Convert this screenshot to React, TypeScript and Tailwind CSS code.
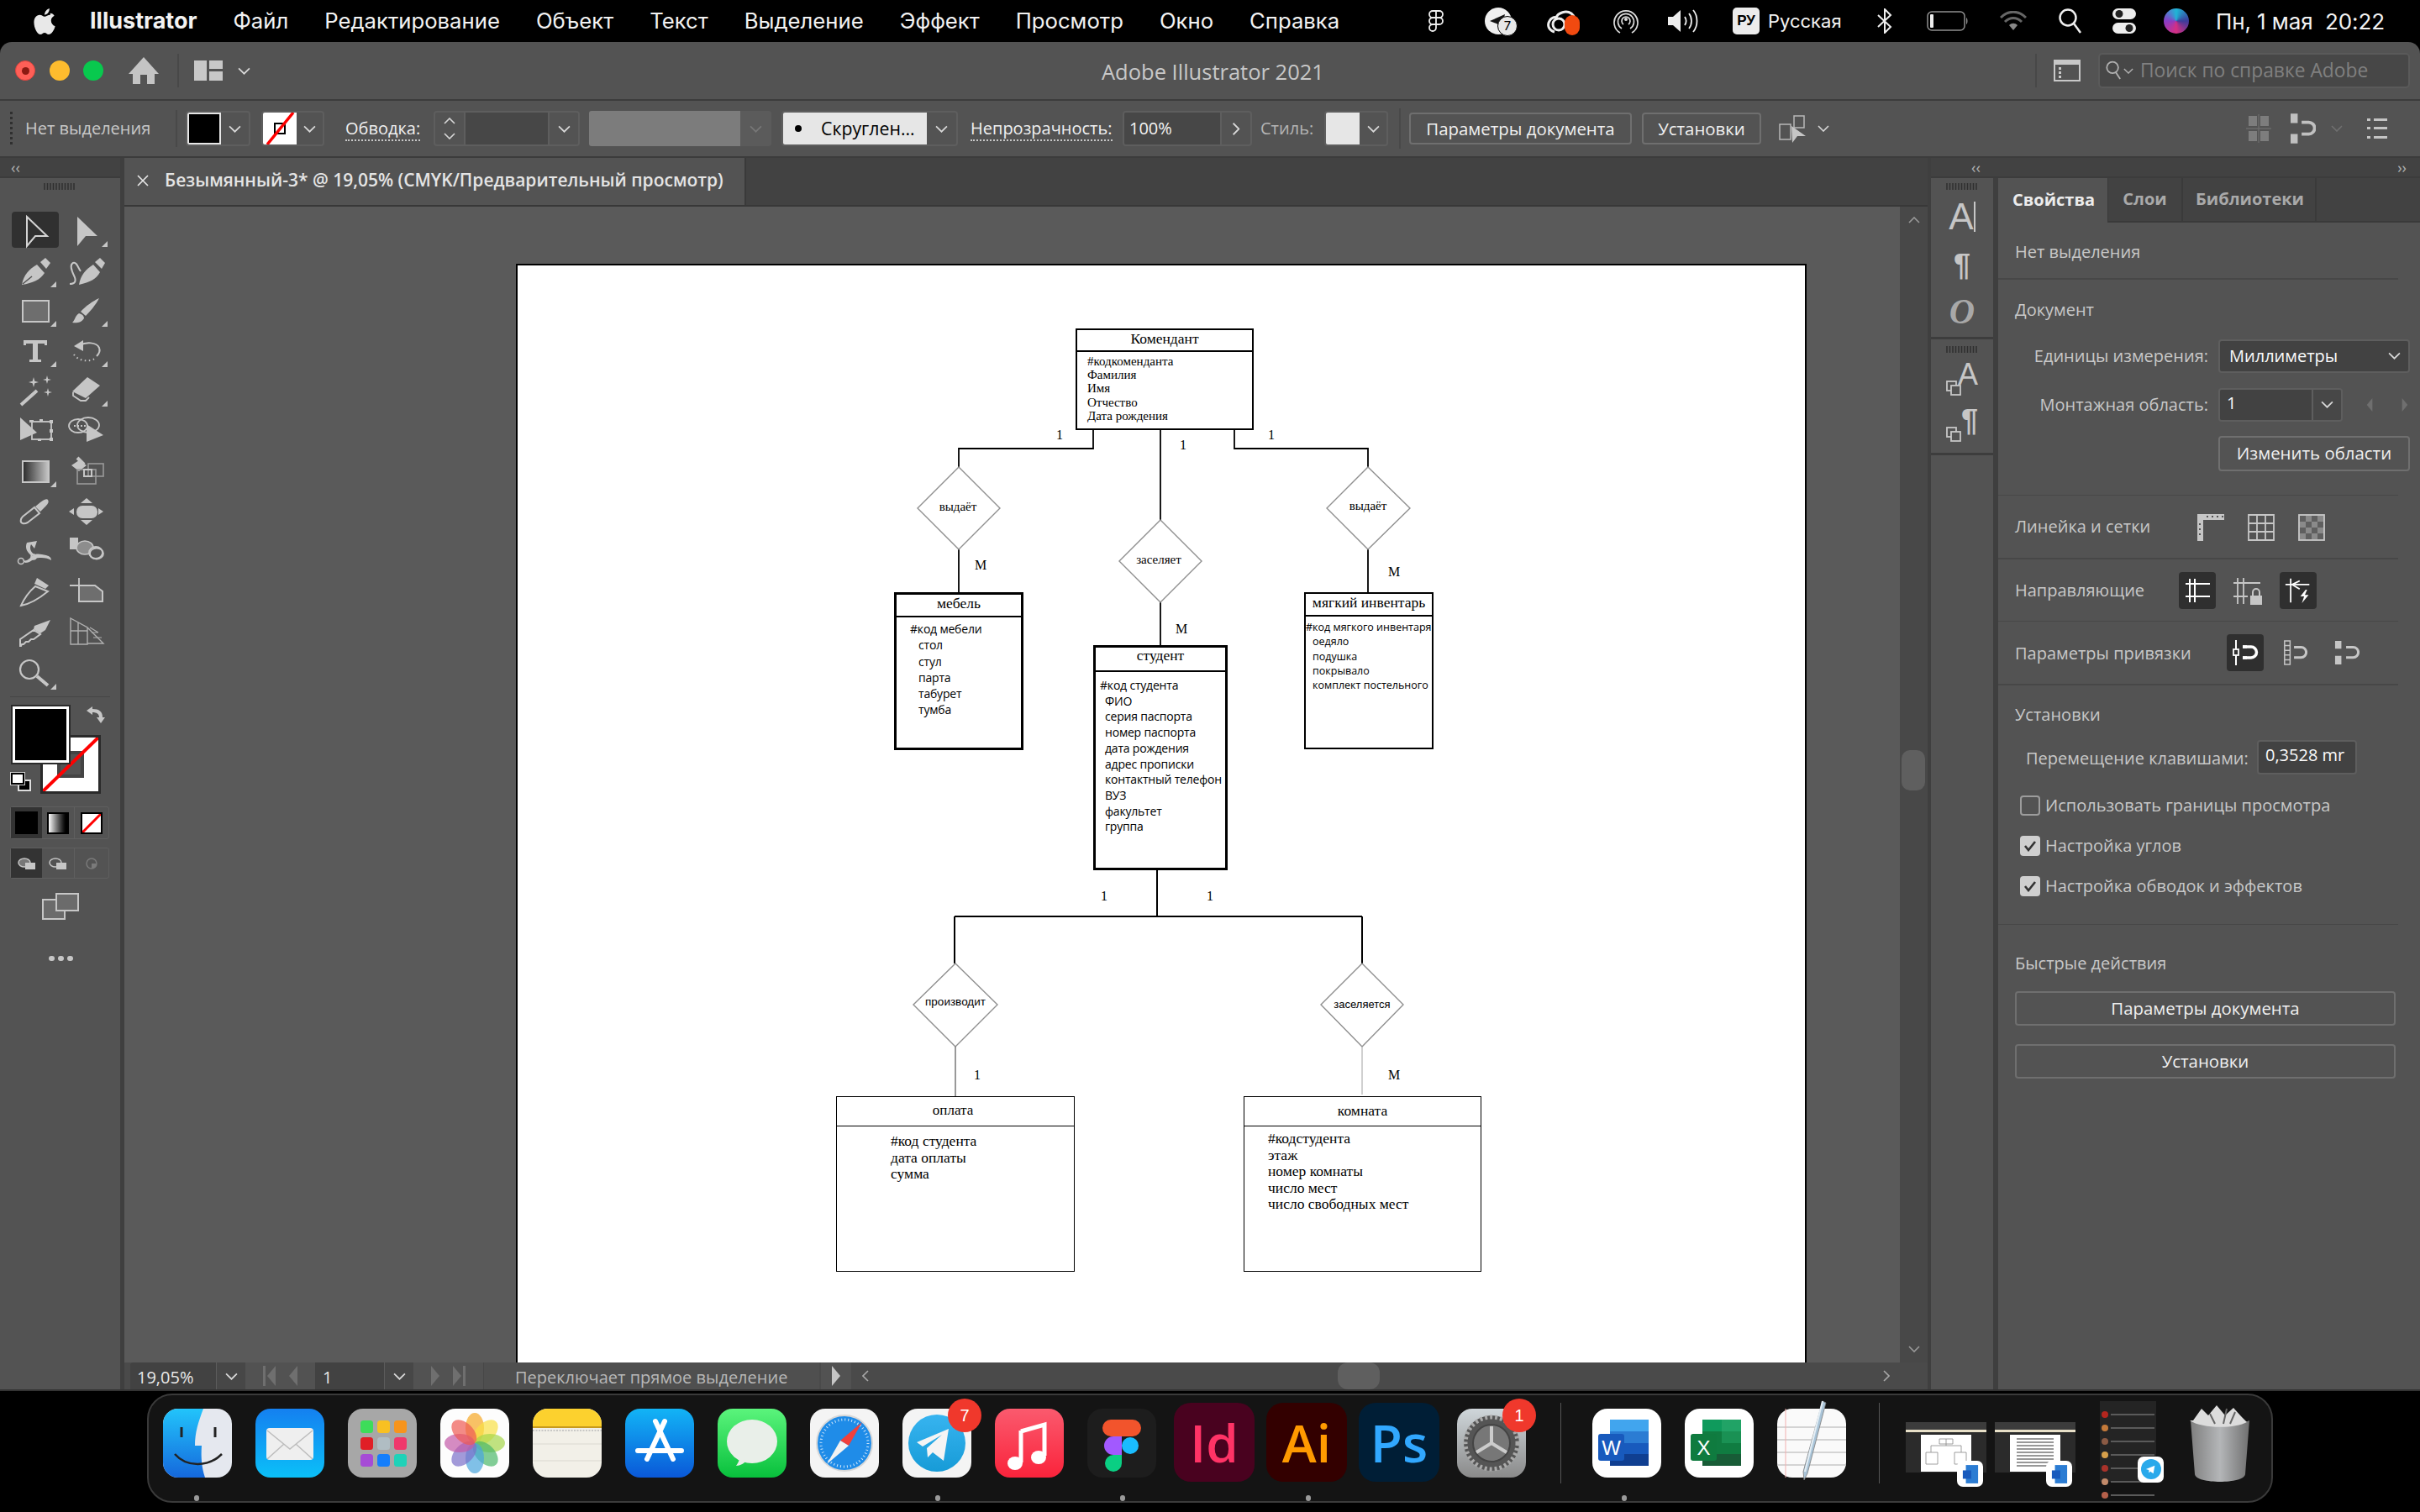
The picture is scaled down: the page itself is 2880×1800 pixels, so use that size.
import React from "react";

const C = "#c6c6c6";

function Chev({ className = "w-[15px] h-[9px]", color = "#d8d8d8" }: { className?: string; color?: string }) {
  return (
    <svg viewBox="0 0 14 8" className={className}>
      <path d="M1 1l6 6 6-6" fill="none" stroke={color} strokeWidth="1.6" />
    </svg>
  );
}

function Grip({ className = "" }: { className?: string }) {
  return (
    <svg viewBox="0 0 38 8" className={`w-[38px] h-[8px] ${className}`}>
      <path d="M1 0v8M4.500 0v8M8 0v8M11.500 0v8M15 0v8M18.500 0v8M22 0v8M25.500 0v8M29 0v8M32.500 0v8M36 0v8" stroke="#2f2f2f" strokeWidth="1.500" />
    </svg>
  );
}

function Corner() {
  return <polygon points="55,34 55,41 48,41" fill={C} />;
}

function star(x: number, y: number, r: number) {
  const k = r * 0.22;
  return `M${x} ${y - r}L${x + k} ${y - k}L${x + r} ${y}L${x + k} ${y + k}L${x} ${y + r}L${x - k} ${y + k}L${x - r} ${y}L${x - k} ${y - k}Z`;
}

const toolIcons: React.ReactNode[] = [
  <polygon key="a" points="20,5 44,28 30,28 20,40" fill="none" stroke="#d4d4d4" strokeWidth="2" />,
  <g key="b"><polygon points="19,5 43,28 29,28 19,40" fill={C} /><Corner /></g>,
  <g key="c"><path d="M14 38c2-12 9-19 18-24l9 10c-5 8-14 12-27 14z" fill={C} /><path d="M36 11l6-5 6 6-5 7z" fill={C} /><path d="M15 37l11-9" stroke="#535353" strokeWidth="1.500" /><Corner /></g>,
  <g key="d"><path d="M10 37c7 0 8-4 5-10s-5-13-1-15 6 6 9 10" fill="none" stroke={C} strokeWidth="2" /><path d="M21 38c2-12 8-18 17-24l8 9c-4 8-12 12-25 15z" fill={C} /><path d="M40 11l6-5 6 6-4 7z" fill={C} /></g>,
  <g key="e"><rect x="15" y="10" width="31" height="25" fill="#6e6e6e" stroke={C} strokeWidth="2" /><Corner /></g>,
  <g key="f"><path d="M45 7C38 10 28 17 23 23c2 2 4 3 6 5C34 23 41 15 45 7z" fill={C} /><path d="M21 25c4 1 6 3 6 6-3 5-9 6-14 5 3-2 3-8 8-11z" fill={C} /><Corner /></g>,
  <g key="g"><path d="M16 9h28v6h-3v-2H33v19h4v3H23v-3h4V13H19v2h-3z" fill={C} /><Corner /></g>,
  <g key="h"><path d="M22 15c7-4 20-4 23 3 2 5-1 8-3 10" fill="none" stroke={C} strokeWidth="2" /><polygon points="15,16 26,9 26,22" fill={C} /><path d="M15 26c5 8 18 9 25 5" fill="none" stroke={C} strokeWidth="2" strokeDasharray="1.500 3.500" /><Corner /></g>,
  <g key="i"><path d="M13 39L32 22" stroke={C} strokeWidth="4" /><path d={star(28, 12, 6)} fill={C} /><path d={star(44, 9, 5)} fill={C} /><path d={star(45, 24, 5)} fill={C} /></g>,
  <g key="j"><path d="M13 23L31 6 46 16 29 31z" fill={C} /><path d="M14 24v4l9 6h6l4-4" fill="none" stroke={C} strokeWidth="1.800" /><Corner /></g>,
  <g key="k"><polygon points="12,6 32,24 12,33" fill={C} /><rect x="26" y="11" width="23" height="21" fill="none" stroke={C} strokeWidth="1.800" /><path d="M23 9h5v3h-5zM35 8h4v3h-4zM47 9h4v4h-4zM47 20h4v4h-4zM47 30h4v4h-4zM33 31h4v3h-4z" fill={C} /></g>,
  <g key="l"><ellipse cx="20" cy="16" rx="11" ry="8" fill="none" stroke={C} strokeWidth="1.800" /><ellipse cx="32" cy="15" rx="13" ry="9" fill="none" stroke={C} strokeWidth="1.800" /><path d="M15 16h14" stroke={C} strokeWidth="2" strokeDasharray="2 2" /><polygon points="30,14 50,27 30,35" fill={C} /></g>,
  <g key="m"><defs><linearGradient id="gr" x1="0" x2="1" y1="0" y2="0"><stop offset="0" stopColor="#2a2a2a" /><stop offset="1" stopColor="#c8c8c8" /></linearGradient></defs><rect x="15" y="10" width="31" height="25" fill="url(#gr)" stroke={C} strokeWidth="2" /><Corner /></g>,
  <g key="n"><path d="M12 15l9-6 9 6-9 7z" fill={C} /><path d="M19 6l8 8" stroke={C} strokeWidth="4" /><rect x="32" y="13" width="18" height="15" fill="none" stroke="#9a9a9a" strokeWidth="1.600" /><rect x="19" y="20" width="22" height="17" fill="none" stroke="#9a9a9a" strokeWidth="1.600" /><rect x="27" y="20" width="9" height="8" fill="none" stroke={C} strokeWidth="2" /></g>,
  <g key="o"><path d="M15 37c-4-1-2-6 0-8l14-11 6 7-14 11c-2 1-4 2-6 1z" fill="none" stroke={C} strokeWidth="2" /><path d="M30 17l6-5c4-3 8-5 9-3 2 3-1 6-4 9l-5 5z" fill={C} /></g>,
  <g key="p"><rect x="18" y="16" width="25" height="15" rx="7" fill={C} /><polygon points="30,7 37,13 23,13" fill={C} /><polygon points="30,39 37,33 23,33" fill={C} /><polygon points="9,23 15,19 15,27" fill={C} /><polygon points="50,23 44,19 44,27" fill={C} /></g>,
  <g key="q"><path d="M14 32c5 4 9-1 12-4 6-4 10-2 17-1 3 1 6 2 6 6-3-2-7-3-12-3-9-1-12 6-19 6z" fill={C} /><path d="M20 12c-3 7 1 12 6 16l3-2c-5-3-6-8-4-12l4 5 3-9-12 2z" fill={C} /><circle cx="13" cy="34" r="3.500" fill="none" stroke={C} strokeWidth="1.500" /><circle cx="28" cy="29" r="3" fill="none" stroke={C} strokeWidth="1.500" /></g>,
  <g key="r"><rect x="10" y="6" width="10" height="14" fill={C} /><ellipse cx="28" cy="18" rx="10" ry="8" fill="#8d8d8d" stroke={C} strokeWidth="1.600" /><ellipse cx="41" cy="24" rx="8" ry="7" fill="#535353" stroke={C} strokeWidth="1.800" /><ellipse cx="42" cy="25" rx="8" ry="6.500" fill="none" stroke={C} strokeWidth="1.800" /></g>,
  <g key="s"><path d="M13 40c4-9 10-17 17-23l15 6C34 32 24 38 13 40z" fill="none" stroke={C} strokeWidth="2" /><path d="M32 7l14 9-4 4-13-6z" fill={C} /></g>,
  <g key="t"><path d="M10 16h13M21 7v9" stroke={C} strokeWidth="1.800" /><path d="M21 16h19l9 7v12H21z" fill="#6e6e6e" stroke={C} strokeWidth="2" /></g>,
  <g key="u"><path d="M12 40v-8l16-11 8 5-8 6h-3l-3 3h-3l-3 3h-2l-1 2z" fill="none" stroke={C} strokeWidth="2" /><path d="M29 16l19-7-6 12-6 4-8-5z" fill={C} /></g>,
  <g key="v"><path d="M11 7l20 11v20H11zM11 22h20M20 12v26M31 18l19 19H31" fill="none" stroke="#b0b0b0" strokeWidth="1.400" /><path d="M34 18l10 6M36 24h8M38 30h10" stroke="#b0b0b0" strokeWidth="1.200" /></g>,
  <g key="w" transform="translate(0 3)"><circle cx="23" cy="17" r="11" fill="none" stroke={C} strokeWidth="2.200" /><path d="M32 25l13 11" stroke={C} strokeWidth="4" /><Corner /></g>,
];

function ToolCell({ i }: { i: number }) {
  return (
    <div className="relative w-[61px] h-[47.6px] flex items-center justify-center">
      {i === 0 && <div className="absolute left-[2.500px] top-0 w-[56px] h-[43px] rounded-[4px] bg-[#303030]" />}
      <svg viewBox="0 0 60 46" className="relative w-[60px] h-[46px] overflow-visible">{toolIcons[i]}</svg>
    </div>
  );
}

function LeftPanel() {
  return (
    <div className="w-[143px] shrink-0 flex flex-col bg-[#535353]">
      <div className="h-[22px] bg-[#424242] flex items-center pl-[13px] text-[#b0b0b0] text-[18px] leading-none">‹‹</div>
      <div className="h-[2px] bg-[#3c3c3c]" />
      <div className="pl-[52px] pt-[6px] h-[40px]"><Grip /></div>
      <div className="grid grid-cols-[61px_61px] pl-[11.500px] mt-[0.200px]">
        {toolIcons.map((_, i) => <ToolCell key={i} i={i} />)}
      </div>
      <div className="mx-[12px] h-[1px] bg-[#454545] mt-[6px]" />
      <div className="relative h-[120px] ml-[13px] mt-[9px]">
        <div className="absolute left-[35px] top-[36px] w-[72px] h-[70px] bg-[#2a2a2a] p-[3px]">
          <div className="relative w-full h-full bg-white flex items-center justify-center overflow-hidden">
            <div className="w-[32px] h-[32px] border-[4px] border-[#444] bg-[#535353]" />
            <svg viewBox="0 0 66 64" preserveAspectRatio="none" className="absolute inset-0 w-full h-full"><path d="M0 64L66 0" stroke="#ff0000" strokeWidth="4" /></svg>
          </div>
        </div>
        <div className="absolute left-0 top-0 w-[71px] h-[71px] bg-[#2a2a2a] p-[2px]">
          <div className="w-full h-full border-[3px] border-white bg-black" />
        </div>
        <svg viewBox="0 0 24 22" className="absolute left-[89px] top-[1px] w-[24px] h-[22px]">
          <path d="M1 6l7-5v3c8 0 12 3 12 10h3l-5 7-5-7h3c0-4-3-6-8-6v3z" fill={C} />
        </svg>
        <div className="absolute left-0 top-[81px] w-[24px] h-[25px]">
          <div className="absolute left-[8px] top-[8px] w-[16px] h-[14px] bg-black border-[2px] border-[#ddd]" />
          <div className="absolute left-0 top-0 w-[16px] h-[14px] bg-white border-[2px] border-black outline outline-[1px] outline-[#ccc]" />
        </div>
      </div>
      <div className="mx-[12px] w-[118px] h-[39px] mt-[1px] rounded-[3px] border border-[#5f5f5f] flex">
        <div className="w-[37px] bg-[#333] flex items-center justify-center"><div className="w-[27px] h-[27px] bg-black" /></div>
        <div className="flex-1 border-r border-[#5f5f5f] flex items-center justify-center"><div className="w-[26px] h-[26px] border-[2px] border-black bg-gradient-to-r from-white to-black" /></div>
        <div className="w-[40px] flex items-center justify-center"><div className="relative w-[26px] h-[26px] border-[2px] border-black bg-white overflow-hidden"><svg viewBox="0 0 22 22" className="absolute inset-0 w-full h-full"><path d="M0 22L22 0" stroke="#f00" strokeWidth="3" /></svg></div></div>
      </div>
      <div className="mx-[12px] w-[118px] h-[37px] mt-[10px] rounded-[3px] border border-[#5f5f5f] flex">
        <div className="w-[37px] bg-[#333] flex items-center justify-center"><svg viewBox="0 0 22 14" className="w-[22px] h-[14px]"><ellipse cx="8" cy="6" rx="7" ry="5" fill="#777" stroke={C} strokeWidth="1.500" /><rect x="9" y="6" width="12" height="8" fill={C} /></svg></div>
        <div className="flex-1 flex items-center justify-center border-r border-[#5f5f5f]"><svg viewBox="0 0 22 14" className="w-[22px] h-[14px]"><ellipse cx="8" cy="6" rx="7" ry="5" fill="none" stroke={C} strokeWidth="1.500" /><rect x="9" y="6" width="12" height="8" fill={C} /></svg></div>
        <div className="w-[40px] flex items-center justify-center"><svg viewBox="0 0 16 14" className="w-[16px] h-[14px]"><circle cx="8" cy="7" r="6" fill="none" stroke="#7a7a7a" strokeWidth="1.500" /><path d="M8 7h6a6 6 0 0 1-6 6z" fill="#7a7a7a" /></svg></div>
      </div>
      <svg viewBox="0 0 44 32" className="w-[44px] h-[32px] ml-[50px] mt-[17px]"><rect x="1" y="8" width="26" height="23" fill="#6b6b6b" stroke={C} strokeWidth="2" /><rect x="17" y="1" width="26" height="20" fill="#6b6b6b" stroke={C} strokeWidth="2" /></svg>
      <div className="flex gap-[4px] ml-[58px] mt-[43px]">
        <div className="w-[7px] h-[6px] rounded-full bg-[#c6c6c6]" /><div className="w-[7px] h-[6px] rounded-full bg-[#c6c6c6]" /><div className="w-[7px] h-[6px] rounded-full bg-[#c6c6c6]" />
      </div>
    </div>
  );
}

type Row = { t: string; cls?: string };
const boxes = [
  { pos: "left-[666px] top-[77px] w-[212px] h-[121px] border-2", head: "h-[26px] border-b-2 pb-[4px]", title: "Комендант", titleCls: "text-[17.500px]", font: "[font-family:'Liberation_Serif',serif] text-[15px] leading-[16.200px] pl-[12px] pt-[3px]", rows: [{ t: "#кодкоменданта" }, { t: "Фамилия" }, { t: "Имя" }, { t: "Отчество" }, { t: "Дата рождения" }] as Row[] },
  { pos: "left-[450px] top-[391px] w-[154px] h-[188px] border-[3px]", head: "h-[27px] border-b-2 pb-[5px]", title: "мебель", titleCls: "text-[17.500px]", font: "[font-family:'Open_Sans',sans-serif] text-[14px] leading-[19.300px] pl-[16px] pt-[4px] tracking-[-0.200px]", rows: [{ t: "#код мебели" }, { t: "стол", cls: "pl-[10px]" }, { t: "стул", cls: "pl-[10px]" }, { t: "парта", cls: "pl-[10px]" }, { t: "табурет", cls: "pl-[10px]" }, { t: "тумба", cls: "pl-[10px]" }] as Row[] },
  { pos: "left-[687px] top-[454px] w-[160px] h-[268px] border-[3px]", head: "h-[29px] border-b-2 pb-[8px]", title: "студент", titleCls: "text-[17.500px]", font: "[font-family:'Open_Sans',sans-serif] text-[14px] leading-[18.700px] pl-[5px] pt-[7px] tracking-[-0.200px] whitespace-nowrap", rows: [{ t: "#код студента" }, { t: "ФИО", cls: "pl-[6px]" }, { t: "серия паспорта", cls: "pl-[6px]" }, { t: "номер паспорта", cls: "pl-[6px]" }, { t: "дата рождения", cls: "pl-[6px]" }, { t: "адрес прописки", cls: "pl-[6px]" }, { t: "контактный телефон", cls: "pl-[6px]" }, { t: "ВУЗ", cls: "pl-[6px]" }, { t: "факультет", cls: "pl-[6px]" }, { t: "группа", cls: "pl-[6px]" }] as Row[] },
  { pos: "left-[938px] top-[391px] w-[154px] h-[187px] border-2", head: "h-[27px] border-b-2 pb-[5px]", title: "мягкий инвентарь", titleCls: "text-[17.500px]", font: "[font-family:'Open_Sans',sans-serif] text-[12.500px] leading-[17.300px] pl-0 pt-[4px] whitespace-nowrap", rows: [{ t: "#код мягкого инвентаря" }, { t: "оедяло", cls: "pl-[8px]" }, { t: "подушка", cls: "pl-[8px]" }, { t: "покрывало", cls: "pl-[8px]" }, { t: "комплект постельного", cls: "pl-[8px]" }] as Row[] },
  { pos: "left-[381px] top-[991px] w-[284px] h-[209px] border-[1.500px] border-[#555]", head: "h-[35px] border-b-[1.500px] border-[#555] pb-[2px] pr-[6px]", title: "оплата", titleCls: "text-[17px]", font: "[font-family:'Liberation_Serif',serif] text-[17.500px] leading-[19.500px] pl-[64px] pt-[8px]", rows: [{ t: "#код студента" }, { t: "дата оплаты" }, { t: "сумма" }] as Row[] },
  { pos: "left-[866px] top-[991px] w-[283px] h-[209px] border-[1.500px] border-[#555]", head: "h-[35px] border-b-[1.500px] border-[#555] pb-[1px]", title: "комната", titleCls: "text-[17.500px]", font: "[font-family:'Liberation_Serif',serif] text-[17.500px] leading-[19.500px] pl-[28px] pt-[5px]", rows: [{ t: "#кодстудента" }, { t: "этаж" }, { t: "номер комнаты" }, { t: "число мест" }, { t: "число свободных мест" }] as Row[] },
];

const labels = [
  { t: "1", c: "left-[647px] top-[204px] text-[16px]" },
  { t: "1", c: "left-[794px] top-[216px] text-[16px]" },
  { t: "1", c: "left-[899px] top-[204px] text-[16px]" },
  { t: "М", c: "left-[553px] top-[359px] text-[16px]" },
  { t: "М", c: "left-[792px] top-[435px] text-[16px]" },
  { t: "М", c: "left-[1045px] top-[367px] text-[16px]" },
  { t: "1", c: "left-[700px] top-[753px] text-[16px]" },
  { t: "1", c: "left-[826px] top-[753px] text-[16px]" },
  { t: "1", c: "left-[549px] top-[966px] text-[16px]" },
  { t: "М", c: "left-[1045px] top-[966px] text-[16px]" },
  { t: "выдаёт", c: "left-[526px] top-[289px] text-[15px]" },
  { t: "заселяет", c: "left-[765px] top-[352px] text-[15px]" },
  { t: "выдаёт", c: "left-[1014px] top-[288px] text-[15px]" },
  { t: "производит", c: "left-[523px] top-[879px] text-[13.500px] [font-family:'Liberation_Sans',sans-serif]" },
  { t: "заселяется", c: "left-[1007px] top-[881px] text-[13px] [font-family:'Liberation_Sans',sans-serif]" },
];

function Artboard() {
  return (
    <div className="relative w-[1536px] h-[1330px] bg-white outline-2 -outline-offset-2 outline-black [font-family:'Liberation_Serif',serif] text-black">
      <svg className="absolute inset-0 w-[1536px] h-[1308px]" viewBox="0 0 1536 1308" fill="none">
        <path d="M687 198V220H527V242M767 198V305M855 198V220H1014V242M527 340V391M767 403V454M1014 340V391" stroke="#000" strokeWidth="1.800" />
        <path d="M763 722V777M522 777H1007M522 777V833M1007 777V833" stroke="#000" strokeWidth="2" />
        <path d="M527 242L576 291 527 340 478 291ZM767 305L816 354 767 403 718 354ZM1014 242L1064 291 1014 340 965 291ZM523 833L573 882 523 932 473 882ZM1007 833L1056 882 1007 932 958 882Z" stroke="#8f8f8f" strokeWidth="1.400" />
        <path d="M523 932V991" stroke="#777" strokeWidth="1.500" />
        <path d="M1007 932V989" stroke="#c0c0c0" strokeWidth="1.500" />
      </svg>
      {boxes.map((b) => (
        <div key={b.title} className={`absolute bg-white ${b.pos} border-black flex flex-col`}>
          <div className={`${b.head} border-black flex items-center justify-center ${b.titleCls} shrink-0 whitespace-nowrap`}>{b.title}</div>
          <div className={b.font}>
            {b.rows.map((r) => <div key={r.t} className={r.cls}>{r.t}</div>)}
          </div>
        </div>
      ))}
      {labels.map((l, i) => (
        <div key={i} className={`absolute -translate-x-1/2 -translate-y-1/2 whitespace-nowrap leading-none ${l.c}`}>{l.t}</div>
      ))}
    </div>
  );
}

function Triangle({ dir, cls }: { dir: "l" | "r"; cls: string }) {
  return (
    <svg viewBox="0 0 10 24" className={`w-[10px] h-[24px] ${cls}`}>
      <polygon points={dir === "l" ? "10,0 10,24 0,12" : "0,0 0,24 10,12"} fill="currentColor" />
    </svg>
  );
}

function Center() {
  return (
    <div className="flex-1 min-w-0 flex flex-col">
      <div className="h-[58px] bg-[#424242] border-b-2 border-[#383838] flex shrink-0">
        <div className="w-[740px] bg-[#535353] flex items-center border-r-2 border-[#3a3a3a] pb-[2px]">
          <svg viewBox="0 0 14 14" className="ml-[15px] mr-[19px] w-[14px] h-[14px]"><path d="M1 1l12 12M13 1L1 13" stroke="#e8e8e8" strokeWidth="1.600" /></svg>
          <span className="text-[#e4e4e4] text-[21px] font-semibold whitespace-nowrap">Безымянный-3* @ 19,05% (CMYK/Предварительный просмотр)</span>
        </div>
      </div>
      <div className="flex-1 min-h-0 flex">
        <div className="flex-1 bg-[#5a5a5a] pl-[466px] pt-[68px] overflow-hidden">
          <Artboard />
        </div>
        <div className="w-[33px] bg-[#484848] flex flex-col items-center relative py-[10px]">
          <Chev className="w-[14px] h-[8px] rotate-180 mt-[2px]" color="#9a9a9a" />
          <div className="absolute left-[2px] top-[647px] w-[28px] h-[48px] rounded-[10px] bg-[#5f5f5f]" />
          <Chev className="w-[14px] h-[8px] mt-auto mb-[2px]" color="#9a9a9a" />
        </div>
      </div>
      <div className="h-[32px] bg-[#4a4a4a] flex items-stretch relative shrink-0 text-[20px] leading-none">
        <div className="ml-[7px] w-[102px] bg-[#424242] flex items-center pl-[8px] pt-[3px] text-[#e8e8e8] rounded-tl-[4px]">19,05%</div>
        <div className="w-[35px] bg-[#474747] border-l border-[#5c5c5c] flex items-center justify-center"><Chev /></div>
        <div className="w-[83px] bg-[#525252] flex items-center justify-center gap-[16px] text-[#6f6f6f]">
          <span className="flex items-center gap-[2px]"><span className="w-[3px] h-[24px] bg-current" /><Triangle dir="l" cls="" /></span>
          <Triangle dir="l" cls="" />
        </div>
        <div className="w-[82px] bg-[#424242] flex items-center pl-[9px] pt-[3px] text-[#e8e8e8]">1</div>
        <div className="w-[35px] bg-[#474747] border-l border-[#5c5c5c] flex items-center justify-center"><Chev /></div>
        <div className="w-[83px] bg-[#525252] flex items-center justify-center gap-[16px] text-[#6f6f6f]">
          <Triangle dir="r" cls="" />
          <span className="flex items-center gap-[2px]"><Triangle dir="r" cls="" /><span className="w-[3px] h-[24px] bg-current" /></span>
        </div>
        <div className="w-[400px] bg-[#4f4f4f] border-l border-[#474747] flex items-center pl-[37px] pt-[3px] text-[#b8b8b8] whitespace-nowrap">Переключает прямое выделение</div>
        <div className="w-[36px] ml-[2px] bg-[#525252] flex items-center justify-center text-[#c6c6c6]"><Triangle dir="r" cls="" /></div>
        <div className="ml-[10px] flex items-center"><Chev className="w-[14px] h-[8px] rotate-90" color="#a8a8a8" /></div>
        <div className="absolute left-[1444px] top-0 w-[50px] h-[32px] rounded-[12px] bg-[#5f5f5f]" />
        <div className="absolute left-[2090px] top-[12px]"><Chev className="w-[14px] h-[8px] -rotate-90" color="#a8a8a8" /></div>
      </div>
    </div>
  );
}

function IconColumn() {
  return (
    <div className="w-[74px] shrink-0 bg-[#535353] flex flex-col items-center [font-family:'Liberation_Sans',sans-serif]">
      <div className="h-[192px] w-full border-b-[3px] border-[#3d3d3d] flex flex-col items-center pt-[6px]">
        <Grip />
        <div className="h-[34px] mt-[15px] flex items-center text-[44px] leading-none text-[#c6c6c6]">A<span className="w-[2px] h-[36px] bg-[#c6c6c6]" /></div>
        <div className="h-[34px] mt-[24px] text-[36px] font-bold leading-[34px] text-[#c6c6c6]">¶</div>
        <div className="h-[36px] mt-[20px] text-[42px] font-bold leading-[36px] italic text-[#a8a8a8] [font-family:'Liberation_Serif',serif]">O</div>
      </div>
      <div className="h-[138px] w-full border-b-[3px] border-[#3d3d3d] flex flex-col items-center pt-[8px]">
        <Grip />
        <div className="relative w-[38px] h-[38px] mt-[13px]"><span className="absolute right-0 -top-[5px] text-[36px] leading-none text-[#c6c6c6]">A</span><svg viewBox="0 0 18 18" className="absolute left-0 bottom-0 w-[18px] h-[18px]"><rect x="1" y="1" width="11" height="11" fill="none" stroke={C} strokeWidth="1.800" /><rect x="6" y="6" width="11" height="11" fill="#535353" stroke={C} strokeWidth="1.800" /></svg></div>
        <div className="relative w-[38px] h-[38px] mt-[17px]"><span className="absolute right-0 -top-[5px] text-[36px] font-bold leading-none text-[#c6c6c6]">¶</span><svg viewBox="0 0 18 18" className="absolute left-0 bottom-0 w-[18px] h-[18px]"><rect x="1" y="1" width="11" height="11" fill="none" stroke={C} strokeWidth="1.800" /><rect x="6" y="6" width="11" height="11" fill="#535353" stroke={C} strokeWidth="1.800" /></svg></div>
      </div>
    </div>
  );
}

function IconBox({ on, children, cls = "" }: { on?: boolean; children: React.ReactNode; cls?: string }) {
  return <div className={`w-[44px] h-[44px] rounded-[4px] flex items-center justify-center ${on ? "bg-[#2f2f2f]" : ""} ${cls}`}>{children}</div>;
}

function Check({ on, label, cls }: { on?: boolean; label: string; cls: string }) {
  return (
    <div className={`flex items-center ${cls}`}>
      <div className={`w-[24px] h-[24px] rounded-[4px] flex items-center justify-center ${on ? "bg-[#cfcfcf]" : "border-2 border-[#9c9c9c]"}`}>
        {on && <svg viewBox="0 0 16 14" className="w-[16px] h-[14px]"><path d="M2 7l4 5 8-10" fill="none" stroke="#333" strokeWidth="2.600" /></svg>}
      </div>
      <span className="ml-[6px] text-[#c8c8c8] text-[20px] leading-none whitespace-nowrap">{label}</span>
    </div>
  );
}

function Divider({ cls }: { cls: string }) {
  return <div className={`w-[476px] h-[1.500px] bg-[#474747] ${cls}`} />;
}

const btn = "border-2 border-[#6f6f6f] rounded-[4px] flex items-center justify-center text-[#f0f0f0] text-[20.400px] leading-none whitespace-nowrap";

function Props() {
  return (
    <div className="flex-1 min-w-0 flex flex-col bg-[#535353] text-[20px] text-[#c8c8c8]">
      <div className="h-[53px] bg-[#424242] flex border-b-2 border-[#3a3a3a] shrink-0">
        <div className="w-[130px] bg-[#535353] flex items-center justify-center font-bold text-[#ececec] -mb-[2px] z-10 pb-[2px] pl-[2px]">Свойства</div>
        <div className="w-[90px] flex items-center justify-center font-bold text-[#a9a9a9] border-r-2 border-[#3a3a3a] border-l border-l-[#3a3a3a] pb-[2px]">Слои</div>
        <div className="w-[159px] flex items-center justify-center font-bold text-[#a9a9a9] border-r-2 border-[#3a3a3a] pb-[2px] pl-[2px]">Библиотеки</div>
      </div>
      <div className="pl-[20px] mt-[21px] leading-[28px]">Нет выделения</div>
      <Divider cls="mt-[17px]" />
      <div className="pl-[20px] mt-[22px] leading-[28px]">Документ</div>
      <div className="flex items-center mt-[21px] h-[40px]">
        <div className="w-[250px] text-right whitespace-nowrap">Единицы измерения:</div>
        <div className="ml-[12px] w-[228px] h-[40px] bg-[#424242] rounded-[4px] border-2 border-[#5e5e5e] flex items-center pl-[11px] pr-[9px] justify-between text-[#fafafa]">Миллиметры<Chev className="w-[15px] h-[9px]" /></div>
      </div>
      <div className="flex items-center mt-[18px] h-[40px]">
        <div className="w-[250px] text-right whitespace-nowrap">Монтажная область:</div>
        <div className="ml-[12px] w-[148px] h-[40px] rounded-[4px] border-2 border-[#5e5e5e] flex overflow-hidden text-[#fafafa]">
          <div className="flex-1 bg-[#424242] pl-[8px] leading-[32px]">1</div>
          <div className="w-[35px] bg-[#474747] border-l-2 border-[#5e5e5e] flex items-center justify-center"><Chev className="w-[15px] h-[9px]" /></div>
        </div>
        <Triangle dir="l" cls="ml-[27px] !w-[10px] !h-[16px] text-[#6f6f6f]" />
        <Triangle dir="r" cls="ml-[32px] !w-[10px] !h-[16px] text-[#6f6f6f]" />
      </div>
      <div className={`${btn} ml-[262px] w-[228px] h-[42px] mt-[17px]`}>Изменить области</div>
      <Divider cls="mt-[28px]" />
      <div className="flex items-center h-[44px] mt-[16px] pl-[20px]">
        <div className="w-[217px] whitespace-nowrap pb-[2px]">Линейка и сетки</div>
        <svg viewBox="0 0 32 32" className="w-[32px] h-[32px]"><path d="M0 0h32v7H7v25H0z" fill={C} /><path d="M11 3h2M17 3h2M23 3h2M29 3h2M3 11v2M3 17v2M3 23v2" stroke="#535353" strokeWidth="2" /></svg>
        <svg viewBox="0 0 32 32" className="w-[32px] h-[32px] ml-[28px]"><path d="M1 1h30v30H1zM11 1v30M21 1v30M1 11h30M1 21h30" fill="none" stroke={C} strokeWidth="1.800" /></svg>
        <svg viewBox="0 0 32 32" className="w-[32px] h-[32px] ml-[28px]"><rect x="1" y="1" width="30" height="30" fill="#8a8a8a" stroke={C} strokeWidth="1.800" /><path d="M2 2h7v7H2zM16 2h7v7h-7zM9 9h7v7H9zM23 9h7v7h-7zM2 16h7v7H2zM16 16h7v7h-7zM9 23h7v7H9zM23 23h7v7h-7z" fill="#5f5f5f" /></svg>
      </div>
      <Divider cls="mt-[14px]" />
      <div className="flex items-center h-[44px] mt-[15px] pl-[20px]">
        <div className="w-[195px] whitespace-nowrap">Направляющие</div>
        <IconBox on><svg viewBox="0 0 32 32" className="w-[32px] h-[32px]"><path d="M7 2v28M13 2v28M2 8h29M2 23h29" stroke="#fff" strokeWidth="2" /></svg></IconBox>
        <svg viewBox="0 0 36 36" className="w-[36px] h-[36px] ml-[21px]"><path d="M5 3v31M12 3v31M0 9h32M0 25h17" stroke={C} strokeWidth="1.800" /><rect x="20" y="24" width="14" height="11" fill={C} /><path d="M23 24v-4a4 4 0 0 1 8 0v4" fill="none" stroke={C} strokeWidth="2" /></svg>
        <IconBox on cls="ml-[19px]"><svg viewBox="0 0 36 36" className="w-[32px] h-[32px]"><path d="M8 2v32M1 10h32" stroke="#fff" strokeWidth="2" /><path d="M10 10l10-5M10 10l10 6" stroke="#fff" strokeWidth="2" /><path d="M28 17l-7 9h5l-3 9 9-11h-5l3-7z" fill="#fff" /></svg></IconBox>
      </div>
      <Divider cls="mt-[14px]" />
      <div className="flex items-center h-[44px] mt-[15px] pl-[20px]">
        <div className="w-[252px] whitespace-nowrap pt-[2px]">Параметры привязки</div>
        <IconBox on><svg viewBox="0 0 32 32" className="w-[32px] h-[32px]"><path d="M5 1v30" stroke="#fff" strokeWidth="2" /><rect x="2" y="12" width="6" height="7" fill="#2f2f2f" stroke="#fff" strokeWidth="1.800" /><path d="M13 9h10a6 6 0 0 1 0 13H13" fill="none" stroke="#fff" strokeWidth="3.500" /><path d="M13 9h5M13 22h5" stroke="#fff" strokeWidth="3.500" /></svg></IconBox>
        <svg viewBox="0 0 32 32" className="w-[30px] h-[32px] ml-[22px]"><path d="M3 1h7v30H3zM3 7h7M3 13h7M3 19h7M3 25h7" fill="none" stroke={C} strokeWidth="1.600" /><path d="M15 9h9a6 6 0 0 1 0 13h-9" fill="none" stroke={C} strokeWidth="3.200" /></svg>
        <svg viewBox="0 0 32 32" className="w-[30px] h-[32px] ml-[32px]"><path d="M1 1h8v10H1zM1 20h8v11H1z" fill={C} /><path d="M15 9h9a6 6 0 0 1 0 13h-9" fill="none" stroke={C} strokeWidth="3.200" /></svg>
      </div>
      <Divider cls="mt-[15px]" />
      <div className="pl-[20px] mt-[21px] leading-[28px]">Установки</div>
      <div className="flex items-center mt-[16px] h-[41px] pl-[33px]">
        <div className="w-[275px] whitespace-nowrap mt-[4px]">Перемещение клавишами:</div>
        <div className="w-[119px] h-[41px] bg-[#424242] border-2 border-[#5e5e5e] rounded-[4px] pl-[8px] leading-[31px] text-[#fafafa] whitespace-nowrap">0,3528 mr</div>
      </div>
      <Check label="Использовать границы просмотра" cls="ml-[26px] mt-[25px]" />
      <Check on label="Настройка углов" cls="ml-[26px] mt-[24px]" />
      <Check on label="Настройка обводок и эффектов" cls="ml-[26px] mt-[24px]" />
      <Divider cls="mt-[33px]" />
      <div className="pl-[20px] mt-[32px] leading-[28px]">Быстрые действия</div>
      <div className={`${btn} ml-[20px] w-[453px] h-[41px] mt-[19px]`}>Параметры документа</div>
      <div className={`${btn} ml-[20px] w-[453px] h-[41px] mt-[22px]`}>Установки</div>
    </div>
  );
}

function TitleBar() {
  return (
    <div className="h-[68px] flex items-center shrink-0 border-b-2 border-[#3c3c3c] relative box-content">
      <div className="ml-[18px] w-[24px] h-[24px] rounded-full bg-[#ff5f57] border border-[#e0443e] flex items-center justify-center"><div className="w-[9px] h-[9px] rounded-full bg-[#8c1a12]" /></div>
      <div className="ml-[17px] w-[24px] h-[24px] rounded-full bg-[#febc2e]" />
      <div className="ml-[16px] w-[24px] h-[24px] rounded-full bg-[#08c94e]" />
      <svg viewBox="0 0 36 32" className="ml-[30px] w-[36px] h-[32px]"><path d="M18 0L36 20h-5v12h-9V21h-8v11H5V20H0z" fill="#c4c4c4" /></svg>
      <div className="ml-[22px] w-[2px] h-[40px] bg-[#484848]" />
      <svg viewBox="0 0 34 24" className="ml-[18px] w-[34px] h-[24px]"><path d="M0 0h15v24H0zM18 0h16v10H18zM18 13h16v11H18z" fill="#c8c8c8" /></svg>
      <Chev className="ml-[18px] w-[15px] h-[9px]" />
      <div className="absolute left-[1311px] top-[20px] text-[25.500px] leading-[30px] text-[#c8c8c8] whitespace-nowrap">Adobe Illustrator 2021</div>
      <div className="ml-auto w-[2px] h-[40px] bg-[#484848]" />
      <svg viewBox="0 0 32 26" className="ml-[20px] w-[32px] h-[26px]"><rect x="1" y="1" width="30" height="24" fill="none" stroke="#c8c8c8" strokeWidth="2" /><rect x="1" y="1" width="30" height="5" fill="#c8c8c8" /><path d="M6 9h3v3H6zM6 14h3v3H6zM6 19h3v3H6z" fill="#c8c8c8" /></svg>
      <div className="ml-[21px] mr-[12px] w-[371px] h-[42px] rounded-[5px] bg-[#474747] border-2 border-[#5a5a5a] flex items-center pl-[6px] text-[#808080] text-[22.800px]">
        <svg viewBox="0 0 22 26" className="w-[20px] h-[24px]"><circle cx="10" cy="9" r="7.500" fill="none" stroke="#b0b0b0" strokeWidth="2" /><path d="M14 15l6 9" stroke="#b0b0b0" strokeWidth="2" /></svg>
        <Chev className="w-[12px] h-[7px] ml-[2px]" color="#b0b0b0" />
        <span className="ml-[8px] whitespace-nowrap">Поиск по справке Adobe</span>
      </div>
    </div>
  );
}

const ctlBox = "h-[42px] rounded-[4px] border-2 border-[#5e5e5e] flex overflow-hidden shrink-0";
const dotted = "text-[#f0f0f0] border-b-2 border-dotted border-[#c8c8c8] leading-[24px]";

function ControlBar() {
  return (
    <div className="h-[66px] shrink-0 border-b-2 border-[#3c3c3c] box-content flex items-center text-[20px] text-[#c8c8c8] whitespace-nowrap">
      <div className="ml-[12px] w-[3px] h-[40px] bg-[repeating-linear-gradient(#2f2f2f_0_3px,transparent_3px_6px)]" />
      <div className="ml-[15px] w-[179px]">Нет выделения</div>
      <div className="w-[2px] h-[44px] bg-[#494949]" />
      <div className={`ml-[10px] w-[77px] ${ctlBox}`}>
        <div className="w-[40px] bg-black border-[2px] border-[#e6e6e6]" />
        <div className="flex-1 flex items-center justify-center"><Chev /></div>
      </div>
      <div className={`ml-[13px] w-[75px] ${ctlBox}`}>
        <div className="relative w-[40px] bg-white flex items-center justify-center overflow-hidden">
          <div className="w-[14px] h-[14px] border-2 border-black" />
          <svg viewBox="0 0 40 38" className="absolute inset-0 w-full h-full"><path d="M5 38L36 0" stroke="#f00" strokeWidth="3.500" /></svg>
        </div>
        <div className="flex-1 flex items-center justify-center"><Chev /></div>
      </div>
      <div className="ml-[25px] w-[91px]"><span className={dotted}>Обводка:</span></div>
      <div className={`ml-[14px] w-[174px] ${ctlBox}`}>
        <div className="w-[36px] flex flex-col items-center justify-center gap-[10px] border-r-2 border-[#5e5e5e]"><Chev className="w-[14px] h-[8px] rotate-180" /><Chev className="w-[14px] h-[8px]" /></div>
        <div className="flex-1 bg-[#474747]" />
        <div className="w-[36px] border-l-2 border-[#5e5e5e] flex items-center justify-center"><Chev /></div>
      </div>
      <div className="ml-[11px] w-[217px] h-[42px] flex rounded-[3px] overflow-hidden shrink-0">
        <div className="w-[180px] bg-[#7c7c7c]" />
        <div className="flex-1 bg-[#5b5b5b] flex items-center justify-center"><Chev color="#777" /></div>
      </div>
      <div className={`ml-[12px] w-[210px] ${ctlBox}`}>
        <div className="w-[171px] bg-[#e6e6e6] text-black text-[21.300px] flex items-center pl-[14px]"><span className="w-[8px] h-[8px] rounded-full bg-black mr-[23px]" />Скруглен...</div>
        <div className="flex-1 flex items-center justify-center"><Chev /></div>
      </div>
      <div className="ml-[15px] w-[167px]"><span className={dotted}>Непрозрачность:</span></div>
      <div className={`ml-[14px] w-[154px] ${ctlBox}`}>
        <div className="flex-1 bg-[#474747] flex items-center pl-[6px] text-[#f4f4f4]">100%</div>
        <div className="w-[36px] border-l-2 border-[#5e5e5e] flex items-center justify-center"><Chev className="w-[16px] h-[9px] -rotate-90" /></div>
      </div>
      <div className="ml-[10px] w-[63px] text-[#b4b4b4]">Стиль:</div>
      <div className={`ml-[13px] w-[76px] ${ctlBox}`}>
        <div className="w-[40px] bg-[#e6e6e6]" />
        <div className="flex-1 flex items-center justify-center"><Chev /></div>
      </div>
      <div className="ml-[13px] w-[2px] h-[48px] bg-[#494949]" />
      <div className={`${btn} ml-[10px] w-[265px] h-[38px] shrink-0`}>Параметры документа</div>
      <div className={`${btn} ml-[12px] w-[142px] h-[38px] shrink-0`}>Установки</div>
      <svg viewBox="0 0 32 34" className="ml-[21px] w-[32px] h-[34px] shrink-0"><rect x="1" y="12" width="13" height="18" fill="none" stroke="#b8b8b8" strokeWidth="1.500" /><rect x="18" y="2" width="12" height="14" fill="none" stroke="#b8b8b8" strokeWidth="1.500" /><polygon points="15,14 32,26 22,26 16,34" fill="#c6c6c6" /></svg>
      <Chev className="ml-[14px] w-[14px] h-[8px]" />
      <svg viewBox="0 0 30 34" className="ml-[496px] w-[30px] h-[34px] shrink-0"><path d="M3 2h10v12H3zM17 2h10v12H17zM3 20h10v12H3zM17 20h10v12H17z" fill="#7d7d7d" /><path d="M15 0v34M0 17h30" stroke="#6b6b6b" strokeWidth="1.400" /></svg>
      <svg viewBox="0 0 32 38" className="ml-[23px] w-[30px] h-[36px] shrink-0"><path d="M0 0h9v12H0zM0 26h9v12H0z" fill="#c0c0c0" /><path d="M14 11h9a7 7 0 0 1 0 15h-9" fill="none" stroke="#c0c0c0" strokeWidth="4" /></svg>
      <Chev className="ml-[18px] w-[14px] h-[8px]" color="#707070" />
      <svg viewBox="0 0 24 26" className="ml-[29px] w-[24px] h-[26px] shrink-0"><path d="M0 1h4v3H0zM8 1h16v3H8zM0 11h4v3H0zM8 11h16v3H8zM0 22h4v3H0zM8 22h16v3H8z" fill="#c4c4c4" /></svg>
    </div>
  );
}

function MenuBar() {
  const items = ["Файл", "Редактирование", "Объект", "Текст", "Выделение", "Эффект", "Просмотр", "Окно", "Справка"];
  return (
    <div className="h-[50px] bg-black flex items-center text-[#f2f2f2] text-[25.700px] [font-family:'Inter',sans-serif] shrink-0 whitespace-nowrap">
      <svg viewBox="0 0 27 32" className="ml-[40px] w-[27px] h-[31px]"><path d="M20 8c-3 0-5 2-7 2s-3-2-6-2C3 8 0 12 0 17c0 7 4 15 8 15 2 0 3-2 5-2s3 2 5 2c4 0 7-6 8-10-3-1-5-4-5-7s2-5 4-6c-1-2-3-3-5-3z" fill="#e8e8e8" /><path d="M13 8c0-4 3-7 6-8 0 4-2 7-6 8z" fill="#e8e8e8" /></svg>
      <span className="ml-[40px] font-bold text-[27px]">Illustrator</span>
      <div className="ml-[43px] flex gap-[43px]">{items.map((m) => <span key={m}>{m}</span>)}</div>
      <div className="ml-auto mr-[38px] flex items-center">
        <svg viewBox="0 0 22 26" className="w-[22px] h-[26px]"><path d="M7 1h8a4 4 0 0 1 0 8H7a4 4 0 0 1 0-8zM7 9h8a4 4 0 0 1 0 8H7a4 4 0 0 1 0-8zM7 17h4v4a4 4 0 1 1-4-4zM11 1v16" fill="none" stroke="#eee" strokeWidth="1.800" /></svg>
        <div className="relative ml-[45px] w-[41px] h-[36px]">
          <svg viewBox="0 0 36 36" className="w-[36px] h-[36px]"><circle cx="18" cy="18" r="16" fill="#efefef" /><path d="M8 18l18-8-4 16-6-5z" fill="#111" /></svg>
          <div className="absolute right-0 bottom-0 w-[24px] h-[24px] rounded-full bg-[#e8e8e8] border border-black text-black text-[15px] leading-[22px] text-center">7</div>
        </div>
        <div className="relative ml-[34px] w-[40px] h-[34px]">
          <svg viewBox="0 0 40 34" className="w-[40px] h-[34px]"><path d="M10 30C3 28 1 22 4 17c2-4 6-5 8-4 2-6 12-9 18-5 4 3 5 9 3 12" fill="none" stroke="#eee" strokeWidth="3" /><circle cx="15" cy="21" r="7" fill="none" stroke="#eee" strokeWidth="3" /></svg>
          <div className="absolute right-0 bottom-0 w-[18px] h-[24px] rounded-full bg-[#f14a10]" />
        </div>
        <svg viewBox="0 0 30 36" className="ml-[40px] w-[30px] h-[36px]"><g fill="none" stroke="#ddd" strokeWidth="1.700"><path d="M8 32A14 14 0 1 1 22 32" /><path d="M10 27a9.500 9.500 0 1 1 10 0" /><path d="M12 22a5 5 0 1 1 6 0" /></g><circle cx="15" cy="16" r="2" fill="#ddd" /></svg>
        <svg viewBox="0 0 37 28" className="ml-[35px] w-[37px] h-[28px]"><path d="M0 9h6l9-8v26l-9-8H0z" fill="#eee" /><g fill="none" stroke="#eee" strokeWidth="1.800"><path d="M20 9c2 3 2 7 0 10" /><path d="M25 5c4 5 4 13 0 18" /><path d="M30 1c6 7 6 19 0 26" /></g></svg>
        <div className="ml-[40px] w-[32px] h-[32px] rounded-[5px] bg-[#ececec] text-black text-[17px] font-bold leading-[32px] text-center [font-family:'Liberation_Sans',sans-serif]">РУ</div>
        <span className="ml-[10px] w-[87px] text-[22px]">Русская</span>
        <svg viewBox="0 0 18 30" className="ml-[43px] w-[18px] h-[30px]"><path d="M1 8l15 14-7 7V1l7 7L1 22" fill="none" stroke="#eee" strokeWidth="2" /></svg>
        <svg viewBox="0 0 50 24" className="ml-[41px] w-[50px] h-[24px]"><rect x="1" y="1" width="44" height="22" rx="5" fill="none" stroke="#8f8f8f" strokeWidth="1.500" /><rect x="4" y="4" width="4" height="16" rx="1" fill="#eee" /><path d="M47 8c2 1 2 7 0 8z" fill="#8f8f8f" /></svg>
        <svg viewBox="0 0 32 24" className="ml-[37px] w-[32px] h-[24px]"><path d="M1 8c9-9 21-9 30 0" fill="none" stroke="#666" strokeWidth="3" /><path d="M6 13c6-6 14-6 20 0" fill="none" stroke="#666" strokeWidth="3" /><path d="M11 17c3-3 7-3 10 0l-5 6z" fill="#888" /></svg>
        <svg viewBox="0 0 27 30" className="ml-[38px] w-[27px] h-[30px]"><circle cx="11" cy="11" r="9.500" fill="none" stroke="#eee" strokeWidth="2.500" /><path d="M18 18l8 11" stroke="#eee" strokeWidth="2.500" /></svg>
        <svg viewBox="0 0 30 32" className="ml-[36px] w-[30px] h-[32px]"><rect x="1" y="1" width="28" height="13" rx="6.500" fill="#eee" /><circle cx="9" cy="7.500" r="4.500" fill="#222" /><rect x="1" y="18" width="28" height="13" rx="6.500" fill="#eee" /><circle cx="21" cy="24.500" r="4.500" fill="#222" /></svg>
        <div className="ml-[32px] w-[30px] h-[30px] rounded-full bg-[conic-gradient(#1fb6d6,#3b3b9a,#d62f83,#8a3cc5,#1fb6d6)]" />
        <span className="ml-[32px] w-[205px] text-[26px] tracking-[-0.100px]">Пн, 1 мая&nbsp; 20:22</span>
      </div>
    </div>
  );
}

function Squircle({ children, vb = "0 0 82 82", cls = "" }: { children: React.ReactNode; vb?: string; cls?: string }) {
  return <svg viewBox={vb} className={`w-[82px] h-[82px] shrink-0 ${cls}`}>{children}</svg>;
}

function Badge({ n, cls }: { n: string; cls: string }) {
  return <div className={`absolute w-[40px] h-[40px] rounded-full bg-[#f0382c] text-white text-[20px] leading-[40px] text-center ${cls}`}>{n}</div>;
}

function Dock() {
  const petals = ["#f5a623", "#f8e045", "#a5d64a", "#4cb86a", "#4aa5dd", "#7a6fc9", "#c35aa8", "#ee5a52"];
  return (
    <div className="relative ml-[175px] mt-[3px] w-[2530px] h-[130px] rounded-[30px] bg-[#141414] border-2 border-[#3a3a3a] box-border flex items-center pl-[17px] pb-[12px] gap-[28px] [font-family:'Liberation_Sans',sans-serif]">
      <div className="shrink-0 relative">
        <Squircle>
          <defs><linearGradient id="f1" x1="0" x2="0" y1="0" y2="1"><stop offset="0" stopColor="#22c4fb" /><stop offset="1" stopColor="#1568dc" /></linearGradient></defs>
          <rect width="82" height="82" rx="18" fill="#e5e8ef" />
          <path d="M18 0h30c-6 16-10 28-10 44h8c-1 14 0 26 4 38H18a18 18 0 0 1-18-18V18A18 18 0 0 1 18 0z" fill="url(#f1)" />
          <path d="M22 22v12M62 22v12" stroke="#222" strokeWidth="3" />
          <path d="M14 54c14 16 40 16 56 0" fill="none" stroke="#222" strokeWidth="2.500" />
        </Squircle>
      </div>
      <Squircle>
        <defs><linearGradient id="f2" x1="0" x2="0" y1="0" y2="1"><stop offset="0" stopColor="#1480f0" /><stop offset="1" stopColor="#0bc0f8" /></linearGradient></defs>
        <rect width="82" height="82" rx="18" fill="url(#f2)" />
        <rect x="13" y="23" width="56" height="38" rx="4" fill="#efefef" />
        <path d="M14 26l27 22 27-22M14 60l20-18M68 60L48 42" fill="none" stroke="#bdbdbd" strokeWidth="1.500" />
      </Squircle>
      <Squircle>
        <rect width="82" height="82" rx="18" fill="#a7a7a7" />
        {["#3ddc5a", "#f8c022", "#f7941d", "#e01f26", "#b0bdc3", "#f0386b", "#a64bd6", "#157efb", "#1fd2b8"].map((c, i) => (
          <rect key={c} x={15 + (i % 3) * 20} y={14 + Math.floor(i / 3) * 20} width="15" height="15" rx="3.500" fill={c} />
        ))}
      </Squircle>
      <Squircle>
        <rect width="82" height="82" rx="18" fill="#fdfdfd" />
        {petals.map((c, i) => (
          <ellipse key={c} cx="41" cy="23" rx="11" ry="18" fill={c} opacity="0.700" transform={`rotate(${i * 45} 41 41)`} />
        ))}
      </Squircle>
      <Squircle>
        <defs><clipPath id="nc"><rect width="82" height="82" rx="18" /></clipPath></defs>
        <g clipPath="url(#nc)">
          <rect width="82" height="82" fill="#f2f0e8" />
          <rect width="82" height="21" fill="#fcd12e" />
          <rect y="21" width="82" height="2" fill="#c79a1c" />
          <path d="M0 26h82" stroke="#bbb" strokeWidth="1.500" strokeDasharray="2 1.500" />
          <path d="M0 42h82M0 62h82" stroke="#e2e0d8" strokeWidth="1.500" />
        </g>
      </Squircle>
      <Squircle>
        <defs><linearGradient id="f3" x1="0" x2="0" y1="0" y2="1"><stop offset="0" stopColor="#12b4f6" /><stop offset="1" stopColor="#0a58d8" /></linearGradient></defs>
        <rect width="82" height="82" rx="18" fill="url(#f3)" />
        <path d="M47 15L26 60M36 15l21 45M15 50h52" stroke="#fff" strokeWidth="6" strokeLinecap="round" />
      </Squircle>
      <Squircle>
        <defs><linearGradient id="f4" x1="0" x2="0" y1="0" y2="1"><stop offset="0" stopColor="#5bf47c" /><stop offset="1" stopColor="#08c03c" /></linearGradient></defs>
        <rect width="82" height="82" rx="18" fill="url(#f4)" />
        <ellipse cx="41" cy="39" rx="30" ry="26" fill="#e9efe9" />
        <path d="M26 58c0 4-2 7-4 10 5 0 10-3 13-7z" fill="#e9efe9" />
      </Squircle>
      <Squircle>
        <rect width="82" height="82" rx="18" fill="#f4f4f4" />
        <circle cx="41" cy="41" r="33" fill="#1f8ce8" stroke="#d8d8d8" strokeWidth="2" />
        <circle cx="41" cy="41" r="28" fill="none" stroke="#cfe6fa" strokeWidth="3" strokeDasharray="1 3" />
        <polygon points="62,16 46,44 36,38" fill="#f0403c" />
        <polygon points="20,66 46,44 36,38" fill="#f2f2f2" />
      </Squircle>
      <div className="relative shrink-0">
        <Squircle>
          <defs><linearGradient id="f5" x1="0" x2="0" y1="0" y2="1"><stop offset="0" stopColor="#37b4f0" /><stop offset="1" stopColor="#179bd7" /></linearGradient></defs>
          <rect width="82" height="82" rx="18" fill="#f4f4f4" />
          <circle cx="41" cy="41" r="34" fill="url(#f5)" />
          <path d="M17 40l38-16-6 38-13-10-6 6-1-11 18-16-23 14z" fill="#f4f4f4" />
        </Squircle>
        <Badge n="7" cls="-right-[12px] -top-[12px]" />
      </div>
      <Squircle>
        <defs><linearGradient id="f6" x1="0" x2="0" y1="0" y2="1"><stop offset="0" stopColor="#fa5a6e" /><stop offset="1" stopColor="#fa233b" /></linearGradient></defs>
        <rect width="82" height="82" rx="18" fill="url(#f6)" />
        <path d="M31 27l28-8v37" fill="none" stroke="#fff" strokeWidth="5" />
        <path d="M31 26v38" stroke="#fff" strokeWidth="5" />
        <ellipse cx="24" cy="65" rx="9" ry="8" fill="#fff" /><ellipse cx="52" cy="58" rx="9" ry="8" fill="#fff" />
      </Squircle>
      <Squircle>
        <rect width="82" height="82" rx="18" fill="#1d1d1d" />
        <path d="M28 13h26a10 10 0 0 1 0 20H28a10 10 0 0 1 0-20z" fill="#f2542c" />
        <path d="M31 33h10v22H31a11 11 0 0 1 0-22z" fill="#a259ff" />
        <circle cx="51" cy="44" r="10" fill="#1abcfe" />
        <path d="M31 55h10v10a10 10 0 1 1-10-10z" fill="#0acf83" />
      </Squircle>
      {[
        { t: "Id", bg: "#49021f", fg: "#ff3366" },
        { t: "Ai", bg: "#330000", fg: "#ff9a00" },
        { t: "Ps", bg: "#001e36", fg: "#31a8ff" },
      ].map((a) => (
        <div key={a.t} className="w-[82px] shrink-0 flex justify-center">
          <div className="w-[96px] h-[94px] shrink-0 rounded-[20px] flex items-center justify-center text-[62px] font-semibold [font-family:'Open_Sans',sans-serif] leading-none -mt-[3px]" style={{ backgroundColor: a.bg, color: a.fg }}>{a.t}</div>
        </div>
      ))}
      <div className="relative shrink-0">
        <Squircle>
          <defs><linearGradient id="f7" x1="0" x2="0" y1="0" y2="1"><stop offset="0" stopColor="#cfd6da" /><stop offset="1" stopColor="#8a8a8a" /></linearGradient></defs>
          <rect width="82" height="82" rx="18" fill="url(#f7)" />
          <circle cx="41" cy="41" r="33" fill="#555" />
          <circle cx="41" cy="41" r="31" fill="none" stroke="#aaa" strokeWidth="5" strokeDasharray="3 3" />
          <circle cx="41" cy="41" r="22" fill="#777" stroke="#444" strokeWidth="2" />
          <path d="M41 41V21M41 41L23 52M41 41l18 11" stroke="#ccc" strokeWidth="4" />
        </Squircle>
        <Badge n="1" cls="-right-[12px] -top-[12px]" />
      </div>
      <div className="ml-[13px] w-[1px] h-[96px] bg-[#555] shrink-0" />
      <Squircle cls="ml-[9px]">
        <rect width="82" height="82" rx="18" fill="#fff" />
        <rect x="21" y="13" width="46" height="55" rx="3" fill="#2b7cd3" />
        <rect x="21" y="13" width="46" height="14" fill="#41a5ee" />
        <rect x="21" y="41" width="46" height="13" fill="#185abd" />
        <rect x="21" y="54" width="46" height="14" fill="#103f91" />
        <rect x="7" y="30" width="31" height="32" rx="3" fill="#185abd" />
        <text x="22.500" y="55" textAnchor="middle" fontSize="24" fontFamily="Liberation Sans" fill="#fff">W</text>
      </Squircle>
      <Squircle>
        <rect width="82" height="82" rx="18" fill="#fff" />
        <rect x="21" y="13" width="46" height="55" rx="3" fill="#107c41" />
        <rect x="44" y="13" width="23" height="14" fill="#21a366" />
        <rect x="21" y="13" width="23" height="14" fill="#0f9a5c" />
        <rect x="44" y="27" width="23" height="14" fill="#33c481" opacity="0.300" />
        <rect x="21" y="54" width="46" height="14" fill="#185c37" />
        <rect x="7" y="30" width="31" height="32" rx="3" fill="#0f7b3f" />
        <text x="22.500" y="55" textAnchor="middle" fontSize="24" fontFamily="Liberation Sans" fill="#fff">X</text>
      </Squircle>
      <div className="relative shrink-0">
        <Squircle>
          <rect width="82" height="82" rx="18" fill="#fafafa" />
          <path d="M0 22h82M0 37h82M0 52h82M0 67h82" stroke="#c8c8c8" strokeWidth="1.500" />
          <path d="M10 0v82" stroke="#f3b0b0" strokeWidth="1" />
        </Squircle>
        <svg viewBox="0 0 30 96" className="absolute left-[29px] -top-[10px] w-[30px] h-[96px]"><path d="M25 1l4 2-22 84-4 8-1-10z" fill="#a9c4d8" stroke="#7a7a7a" strokeWidth="0.800" /><path d="M25 1l-21 84" stroke="#e4eef5" strokeWidth="2" /></svg>
      </div>
      <div className="ml-[11px] w-[1px] h-[96px] bg-[#555] shrink-0" />
      {[0, 1].map((k) => (
        <div key={k} className={`relative w-[96px] h-[60px] shrink-0 bg-[#2b2b2b] mt-[10px] ${k === 0 ? "ml-[3px]" : "-ml-[18px]"}`}>
          <div className="h-[9px] bg-[#3c3c3c]" />
          <div className="h-[3px] bg-[#e8e0c8]" />
          <div className="mt-[3px] mx-auto w-[60px] h-[44px] bg-white flex flex-col items-center pt-[2px]">
            {k === 0 ? <svg viewBox="0 0 60 40" className="w-[60px] h-[40px]"><path d="M30 3v8M12 11h36M12 11v8M48 11v8M22 3h16v6H22zM6 19h14v14H6zM40 19h14v14H40z" fill="none" stroke="#888" strokeWidth="0.800" /></svg> : <svg viewBox="0 0 60 40" className="w-[60px] h-[40px]"><path d="M8 3h44M8 7h44M8 11h44M8 15h44M8 19h44M8 23h44M8 27h44M8 31h44M8 35h44" stroke="#777" strokeWidth="1.400" /></svg>}
          </div>
          <div className="absolute right-[4px] -bottom-[17px] w-[31px] h-[31px] rounded-[7px] bg-white flex items-center justify-center">
            <svg viewBox="0 0 22 26" className="w-[20px] h-[24px]"><rect x="5" y="1" width="16" height="24" fill="#2b7cd3" /><rect x="1" y="8" width="11" height="11" fill="#185abd" /></svg>
          </div>
        </div>
      ))}
      <div className="relative w-[67px] h-[96px] bg-[#242424] shrink-0 ml-[1px] -mt-[5px] flex flex-col gap-[8px] pt-[12px] px-[2px]">
        {["#b3261e", "#c47a3a", "#8a5a44", "#d6a04a", "#a8322a", "#c28a6a", "#b5604a"].map((c) => (
          <div key={c} className="flex items-center gap-[3px]"><div className="w-[8px] h-[8px] rounded-full shrink-0" style={{ backgroundColor: c }} /><div className="h-[2px] flex-1 bg-[#5a5a5a]" /></div>
        ))}
        <div className="absolute -right-[9px] bottom-[-1px] w-[31px] h-[31px] rounded-[7px] bg-white flex items-center justify-center"><div className="w-[24px] h-[24px] rounded-full bg-[#29a9eb] flex items-center justify-center"><svg viewBox="0 0 16 16" className="w-[14px] h-[14px]"><path d="M1 8l12-5-2 11-4-3-2 2v-4z" fill="#fff" /></svg></div></div>
      </div>
      <div className="ml-[12px] shrink-0 -mt-[2px]">
        <svg viewBox="0 0 72 96" className="w-[72px] h-[96px]">
          <defs><linearGradient id="f8" x1="0" x2="1" y1="0" y2="0"><stop offset="0" stopColor="#7f7f7f" /><stop offset="0.500" stopColor="#b4b6b8" /><stop offset="1" stopColor="#6f6f6f" /></linearGradient></defs>
          <path d="M1 22c10 6 60 6 70 0L66 86c-1 12-59 12-60 0z" fill="url(#f8)" />
          <path d="M4 22L14 8l8 8 10-12 10 12 10-9 9 10 7 7c-14 8-54 8-68-2z" fill="#dcdcdc" />
          <path d="M24 14l6 12M44 8l-4 18M54 12l-6 14" stroke="#666" strokeWidth="2" />
        </svg>
      </div>
      {[
        "left-[54px]", "left-[936px]", "left-[1156px]", "left-[1377px]", "left-[1753px]",
      ].map((c) => <div key={c} className={`absolute top-[119px] w-[6px] h-[7px] rounded-full bg-[#9a9a9a] ${c}`} />)}
    </div>
  );
}

export default function App() {
  return (
    <div className="w-[2880px] h-[1800px] bg-black overflow-hidden flex flex-col [font-family:'Open_Sans',sans-serif]">
      <MenuBar />
      <div className="h-[1606px] shrink-0 bg-[#535353] rounded-t-[14px] overflow-hidden flex flex-col border-b-2 border-[#333]">
        <TitleBar />
        <ControlBar />
        <div className="flex-1 min-h-0 flex">
          <LeftPanel />
          <div className="w-[5px] bg-[#3f3f3f] shrink-0" />
          <Center />
          <div className="w-[4px] bg-[#3f3f3f] shrink-0" />
          <div className="w-[582px] shrink-0 flex flex-col">
            <div className="h-[22px] bg-[#424242] flex items-center justify-between px-[48px] text-[#b0b0b0] text-[18px] leading-none shrink-0 pr-[16px]"><span>‹‹</span><span>››</span></div>
            <div className="h-[2px] bg-[#3c3c3c] shrink-0" />
            <div className="flex-1 min-h-0 flex">
              <IconColumn />
              <div className="w-[6px] bg-[#3f3f3f] shrink-0" />
              <Props />
            </div>
          </div>
        </div>
      </div>
      <Dock />
    </div>
  );
}
